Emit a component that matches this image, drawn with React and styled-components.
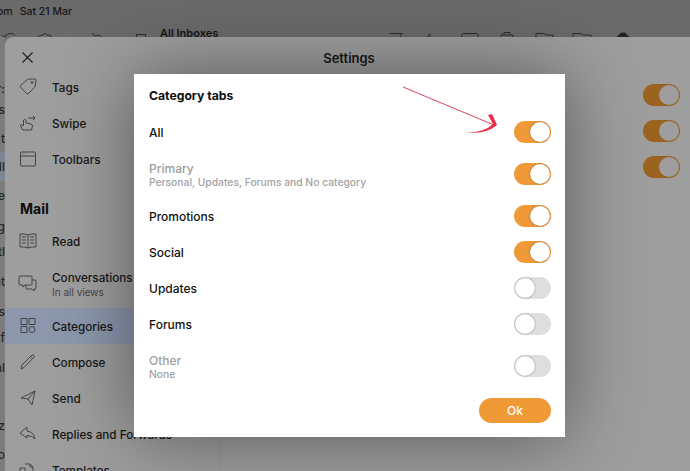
import styled, { createGlobalStyle } from "styled-components";
import { X } from "lucide-react";

const GlobalStyle = createGlobalStyle`
  html, body { margin: 0; padding: 0; background: #6a6a6a; }
  * { box-sizing: border-box; }
`;

const settingsTop = [
  { label: "Tags", icon: "tag" },
  { label: "Swipe", icon: "swipe" },
  { label: "Toolbars", icon: "toolbar" },
];

const settingsMail = [
  { label: "Read", icon: "read" },
  { label: "Conversations", sub: "In all views", icon: "chat" },
  { label: "Categories", icon: "grid", selected: true },
  { label: "Compose", icon: "pencil" },
  { label: "Send", icon: "send" },
  { label: "Replies and Forwards", icon: "reply" },
  { label: "Templates", icon: "copy" },
];

const categories = [
  { label: "All", on: true },
  { label: "Primary", sub: "Personal, Updates, Forums and No category", on: true, muted: true },
  { label: "Promotions", on: true },
  { label: "Social", on: true },
  { label: "Updates", on: false },
  { label: "Forums", on: false },
  { label: "Other", sub: "None", on: false, muted: true },
];

// bits of the mail list that stick out to the left of the sheet
const edgeRows = [
  { text: "r:", h: 59 },
  { text: "es", h: 21 },
  { text: "t", h: 29 },
  { text: "", h: 6 },
  { text: "Il", h: 22, band: true },
  { text: "", h: 7, band: true },
  { text: "re", h: 22 },
  { text: "g", h: 31 },
  { text: "tl", h: 25 },
  { text: "nt", h: 30 },
  { text: "s", h: 30 },
  { text: "nf", h: 26 },
  { text: "hl", h: 30 },
  { text: "z", h: 58 },
  { text: "o", h: 29 },
];

const iconPaths = {
  tag: (
    <>
      <path d="M3.5 9.5 L10.5 3.5 Q11 3 12 3 H18 Q19 3 19 4 L18.2 10 Q18 11 17.5 11.5 L11 18 L10 18 L3.5 11 Q3 10 3.5 9.5 Z" />
      <circle cx="15" cy="6.5" r="0.9" />
    </>
  ),
  swipe: (
    <path d="M6 18 L3.5 14 Q3 12.5 5 12.5 L6.5 14 V8 Q7.5 6.5 9 8 V11 L14 12 Q15.5 12.5 15.5 14 L14.5 18 Z M11 6 H18 M16 4 L18 6 L16 8" />
  ),
  toolbar: (
    <path d="M4.5 4 H17.5 Q18.5 4 18.5 5 V17 Q18.5 18 17.5 18 H4.5 Q3.5 18 3.5 17 V5 Q3.5 4 4.5 4 Z M3.5 8 H18.5 M6 6 h.5 M8.5 6 h.5" />
  ),
  read: (
    <path d="M11 5 Q7 3.5 3 4 V17 Q7 16.5 11 18 Q15 16.5 19 17 V4 Q15 3.5 11 5 Z M11 5 V18 M5 7 H9 M5 10 H9 M5 13 H9 M13 7 H17 M13 10 H17 M13 13 H17" />
  ),
  chat: (
    <path d="M3 3 H14 Q15 3 15 4 V11 Q15 12 14 12 H8 L6 14 V12 H3 Q2 12 2 11 V4 Q2 3 3 3 Z M15 7 H18 Q19 7 19 8 V15 Q19 16 18 16 H17 V18 L15 16 H10 Q9 16 9 15 V12" />
  ),
  grid: (
    <>
      <path d="M4 3.5 H10 V9.5 H4 Z M12 3.5 H18 V9.5 H12 Z M4 11.5 H10 V17.5 H4 Z" />
      <circle cx="15" cy="14.5" r="3" />
    </>
  ),
  pencil: <path d="M4 18 L5 14 L15 4 Q16 3.5 17 4.5 Q17.5 5.5 17 6 L7 16.5 Z M13.5 5.5 L15.5 7.5" />,
  send: <path d="M4 11 L18 4 L15 18 L11 12 Z M11 12 L18 4" />,
  reply: <path d="M10 4 L3 10 L10 15 V12.5 Q15 12.5 18 16 Q17 9 10 8 Z" />,
  copy: <path d="M3 9 H8 V18 H3 Z M8 5 H13 L16 8 V18 H8 M13 5 V8 H16" />,
};

const Icon = ({ name }) => (
  <RowIcon viewBox="0 0 22 22">{iconPaths[name]}</RowIcon>
);

const Toggle = ({ on }) => (
  <Track $on={on}>
    <Knob />
  </Track>
);

const BackToggle = () => (
  <BackTrack>
    <BackKnob />
  </BackTrack>
);

const App = () => (
  <Screen>
    <GlobalStyle />
    <StatusBar>
      <StatusText>om</StatusText>
      <StatusText>Sat 21 Mar</StatusText>
    </StatusBar>
    <Toolbar>
      <ToolIcons width="150" height="13" viewBox="0 0 150 13">
        <path d="M5 13 A6 5 0 0 1 15 11 M2 11 L4 13 L6 11" />
        <path d="M38 13 L41 11 L43 11 L45 9 L47 11 L49 11 L52 13" />
        <path d="M92 9 L95 12 L98 11 L102 13" />
        <path d="M136.5 13 V10.5 H145.5 V13" />
      </ToolIcons>
      <InboxTitle>All Inboxes</InboxTitle>
      <ToolIcons width="250" height="13" viewBox="0 0 250 13">
        <path d="M3 9.5 H15 L13 13" />
        <path d="M40 13 L43 10 V13" />
        <rect x="74.5" y="9.5" width="17" height="4" rx="2" />
        <path d="M114 13 V11 H126 V13 M117 11 V8.5 H123 V11" />
        <path d="M149 13 V9.5 H157 L159 11 H166 V13" />
        <path d="M186 13 V9.5 H194 L196 11 H204 V13" />
        <path d="M230 13 L234 9 H238 L242 13 Z" fill="#222" />
      </ToolIcons>
    </Toolbar>
    <Body>
      <EdgeList>
        {edgeRows.map((row, i) => (
          <EdgeRow key={i} $h={row.h} $band={row.band}>
            {row.text}
          </EdgeRow>
        ))}
      </EdgeList>
      <Sheet>
        <SheetHeader>
          <CloseSlot>
            <X size={19} strokeWidth={1.4} color="#1e1e1e" />
          </CloseSlot>
          <SheetTitle>Settings</SheetTitle>
        </SheetHeader>
        <SheetBody>
          <Sidebar>
            {settingsTop.map((item) => (
              <SideRow key={item.label}>
                <Icon name={item.icon} />
                <SideLabel>{item.label}</SideLabel>
              </SideRow>
            ))}
            <SideHeading>Mail</SideHeading>
            {settingsMail.map((item) => (
              <SideRow key={item.label} $selected={item.selected} $tall={!!item.sub}>
                <Icon name={item.icon} />
                <div>
                  <SideLabel>{item.label}</SideLabel>
                  {item.sub && <SideSub>{item.sub}</SideSub>}
                </div>
              </SideRow>
            ))}
          </Sidebar>
          <DetailPane>
            <BackToggle />
            <BackToggle />
            <BackToggle />
          </DetailPane>
        </SheetBody>
      </Sheet>
    </Body>

    <Modal>
      <ModalTitle>Category tabs</ModalTitle>
      {categories.map((cat) => (
        <CatRow key={cat.label} $tall={!!cat.sub}>
          <div>
            <CatLabel $muted={cat.muted}>{cat.label}</CatLabel>
            {cat.sub && <CatSub>{cat.sub}</CatSub>}
          </div>
          <Toggle on={cat.on} />
        </CatRow>
      ))}
      <ModalFooter>
        <OkButton>Ok</OkButton>
      </ModalFooter>
      <Arrow viewBox="0 0 100 50">
        <path d="M0 1 L91 39" stroke="#d8304a" strokeWidth="0.9" fill="none" />
        <path d="M64 47 Q82 46 90 38 L85 29 L89 28 L94 39 Q84 48 64 47 Z" fill="#ee2c48" />
      </Arrow>
    </Modal>
  </Screen>
);

const Screen = styled.div`
  position: relative;
  width: 690px;
  height: 471px;
  overflow: hidden;
  display: flex;
  flex-direction: column;
  background: #6a6a6a;
  font-family: Inter, "Liberation Sans", sans-serif;
`;
const StatusBar = styled.div`
  height: 24px;
  padding-top: 5px;
  margin-left: -3px;
  display: flex;
  gap: 7px;
`;
const StatusText = styled.span`
  font-size: 10.5px;
  font-weight: 500;
  color: #161616;
`;
const Toolbar = styled.div`
  height: 13px;
  overflow: hidden;
  display: flex;
  align-items: flex-start;
`;
const ToolIcons = styled.svg`
  flex: none;
  fill: none;
  stroke: #2c2c2c;
  stroke-width: 1;
`;
const InboxTitle = styled.div`
  width: 237px;
  flex: none;
  padding-left: 10px;
  font-size: 11px;
  font-weight: 600;
  line-height: 18px;
  color: #161616;
  white-space: nowrap;
`;
const Body = styled.div`
  flex: 1;
  display: flex;
  min-height: 0;
`;
const EdgeList = styled.div`
  width: 5px;
  flex: none;
  background: #7c7c7c;
  overflow: hidden;
  display: flex;
  flex-direction: column;
`;
const EdgeRow = styled.div`
  width: 5px;
  flex: none;
  height: ${(p) => p.$h}px;
  display: flex;
  align-items: flex-end;
  justify-content: flex-end;
  font-size: 12px;
  font-weight: 500;
  line-height: 14px;
  color: #262626;
  white-space: nowrap;
  background: ${(p) => (p.$band ? "#7c8794" : "transparent")};
`;
const Sheet = styled.div`
  position: relative;
  width: 688px;
  flex: none;
  border-radius: 8px 0 0 0;
  background: #9e9e9e;
  overflow: hidden;
`;
const SheetHeader = styled.div`
  position: relative;
  height: 32px;
  display: flex;
  align-items: center;
  justify-content: center;
`;
const CloseSlot = styled.div`
  position: absolute;
  left: 13px;
  top: 11px;
  display: flex;
`;
const SheetTitle = styled.div`
  font-size: 13px;
  font-weight: 600;
  color: #161616;
  margin-top: 10px;
`;
const SheetBody = styled.div`
  display: flex;
`;
const Sidebar = styled.div`
  width: 215px;
  flex: none;
  border-right: 1px solid rgba(0, 0, 0, 0.06);
`;
const SideRow = styled.div`
  height: ${(p) => (p.$tall ? "49px" : "36px")};
  padding-left: 12px;
  display: flex;
  align-items: center;
  gap: 13px;
  white-space: nowrap;
  background: ${(p) => (p.$selected ? "#8c97ac" : "transparent")};
`;
const RowIcon = styled.svg`
  width: 22px;
  height: 22px;
  flex: none;
  fill: none;
  stroke: #3a3a3a;
  stroke-width: 0.9;
`;
const SideLabel = styled.div`
  padding-top: 1px;
  font-size: 11.7px;
  font-weight: 500;
  line-height: 16px;
  color: #161616;
`;
const SideSub = styled.div`
  font-size: 10px;
  font-weight: 400;
  line-height: 13px;
  color: #444;
`;
const SideHeading = styled.div`
  height: 46px;
  padding: 23px 0 0 15px;
  font-size: 14px;
  font-weight: 700;
  color: #0e0e0e;
`;
const DetailPane = styled.div`
  flex: 1;
  padding: 15px 0 0 423px;
  display: flex;
  flex-direction: column;
  gap: 14px;
`;
const BackTrack = styled.div`
  width: 37px;
  height: 22px;
  flex: none;
  border-radius: 11px;
  background: #9a6420;
  display: flex;
  justify-content: flex-end;
  align-items: center;
  padding-right: 1px;
`;
const BackKnob = styled.div`
  width: 20px;
  height: 20px;
  border-radius: 50%;
  background: #9e9e9e;
`;
const Modal = styled.div`
  position: absolute;
  left: 134px;
  top: 74px;
  width: 431px;
  height: 363px;
  background: #fff;
  padding: 13px 14px 0 15px;
  box-shadow: 0 0 70px rgba(0, 0, 0, 0.45);
`;
const ModalTitle = styled.div`
  height: 27px;
  font-size: 12.2px;
  font-weight: 700;
  color: #0e0e0e;
  line-height: 17px;
`;
const CatRow = styled.div`
  display: flex;
  justify-content: space-between;
  align-items: center;
  height: ${(p) => (p.$tall ? "48px" : "36px")};
`;
const CatLabel = styled.div`
  font-size: 12px;
  font-weight: 500;
  line-height: 15px;
  color: ${(p) => (p.$muted ? "#9d9d9d" : "#111")};
`;
const CatSub = styled.div`
  font-size: 10.3px;
  font-weight: 500;
  line-height: 12px;
  color: #a2a2a2;
`;
const Track = styled.div`
  width: 37px;
  height: 22px;
  flex: none;
  border-radius: 11px;
  background: ${(p) => (p.$on ? "#ef9a37" : "#dedede")};
  display: flex;
  align-items: center;
  justify-content: ${(p) => (p.$on ? "flex-end" : "flex-start")};
  padding: 0 1px;
`;
const Knob = styled.div`
  width: 20px;
  height: 20px;
  border-radius: 50%;
  background: #fff;
  box-shadow: 0 0 1.5px rgba(0, 0, 0, 0.55);
`;
const ModalFooter = styled.div`
  display: flex;
  justify-content: flex-end;
  margin-top: 8px;
`;
const OkButton = styled.div`
  width: 72px;
  height: 25px;
  padding-bottom: 1px;
  border-radius: 13px;
  background: #ef9a37;
  color: #fff;
  font-size: 12px;
  font-weight: 500;
  display: flex;
  align-items: center;
  justify-content: center;
`;
const Arrow = styled.svg`
  position: absolute;
  left: 269px;
  top: 12px;
  width: 100px;
  height: 50px;
`;

export default App;
